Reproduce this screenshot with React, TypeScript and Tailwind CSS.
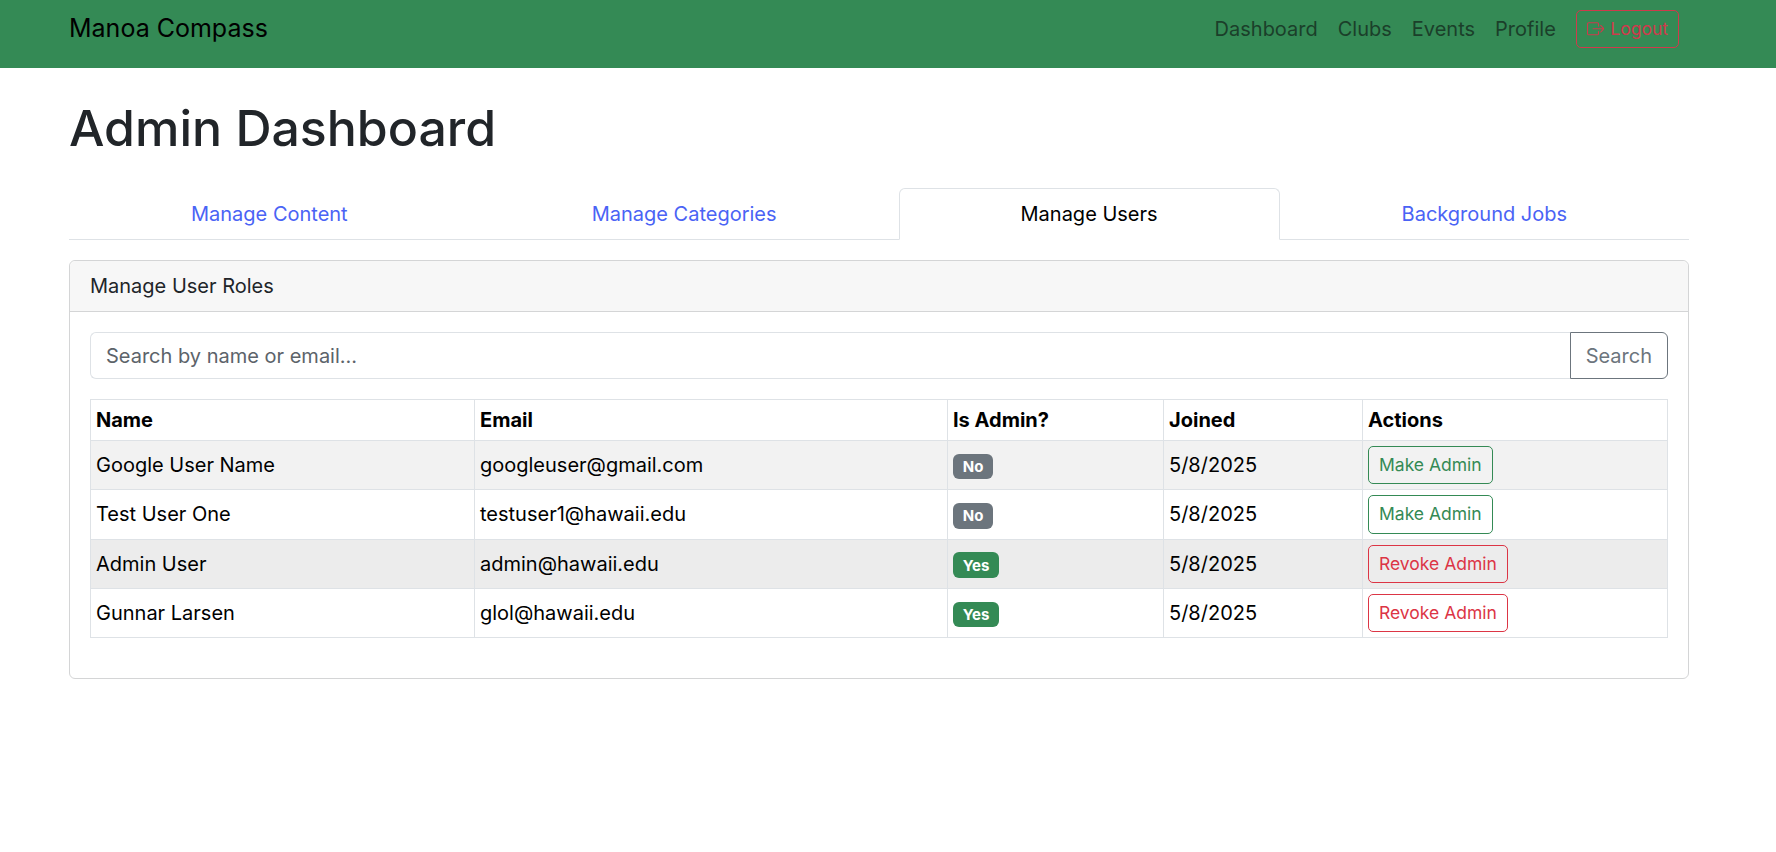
type UserRow = {
  readonly name: string;
  readonly email: string;
  readonly admin: boolean;
  readonly shade: string;
};

const USERS: readonly UserRow[] = [
  { name: "Google User Name", email: "googleuser@gmail.com", admin: false, shade: "bg-[#f2f2f2]" },
  { name: "Test User One", email: "testuser1@hawaii.edu", admin: false, shade: "bg-white" },
  { name: "Admin User", email: "admin@hawaii.edu", admin: true, shade: "bg-[#ececec]" },
  { name: "Gunnar Larsen", email: "glol@hawaii.edu", admin: true, shade: "bg-white" },
];

const NAV_LINKS = ["Dashboard", "Clubs", "Events", "Profile"];

const cellClass = "border border-[#dee2e6] p-[5px] align-middle";

function Navbar() {
  return (
    <nav className="flex h-[68px] items-center justify-between bg-[#348a55] pb-[10px] pl-[69px] pr-[97px]">
      <span className="text-[25px] text-black">Manoa Compass</span>
      <div className="flex items-center gap-[20px] text-[20px] text-[#1b3f2a]">
        {NAV_LINKS.map((link) => (
          <span key={link}>{link}</span>
        ))}
        <button className="flex h-[38px] items-center gap-[6px] rounded-[5px] border border-[#cf3a4c] px-[10px] text-[17.5px] text-[#cf3a4c]">
          <svg width="17.5" height="17.5" viewBox="0 0 16 16" fill="currentColor">
            <path
              fillRule="evenodd"
              d="M10 12.5a.5.5 0 0 1-.5.5h-8a.5.5 0 0 1-.5-.5v-9a.5.5 0 0 1 .5-.5h8a.5.5 0 0 1 .5.5v2a.5.5 0 0 0 1 0v-2A1.5 1.5 0 0 0 9.5 2h-8A1.5 1.5 0 0 0 0 3.5v9A1.5 1.5 0 0 0 1.5 14h8a1.5 1.5 0 0 0 1.5-1.5v-2a.5.5 0 0 0-1 0z"
            />
            <path
              fillRule="evenodd"
              d="M15.854 8.354a.5.5 0 0 0 0-.708l-3-3a.5.5 0 0 0-.708.708L14.293 7.5H5.5a.5.5 0 0 0 0 1h8.793l-2.147 2.146a.5.5 0 0 0 .708.708z"
            />
          </svg>
          Logout
        </button>
      </div>
    </nav>
  );
}

function Tabs() {
  return (
    <div className="flex border-b border-[#dee2e6] text-center text-[20px] leading-[30px]">
      <a className="-mb-px flex-auto border border-transparent px-[20px] py-[10px] text-[#4a63f5]">Manage Content</a>
      <a className="-mb-px flex-auto border border-transparent px-[20px] py-[10px] text-[#4a63f5]">Manage Categories</a>
      <a className="-mb-px flex-auto rounded-t-[6px] border border-[#dee2e6] border-b-white bg-white px-[20px] py-[10px] text-black">
        Manage Users
      </a>
      <a className="-mb-px flex-auto border border-transparent px-[20px] py-[10px] text-[#4a63f5]">Background Jobs</a>
    </div>
  );
}

function Badge({ admin }: { readonly admin: boolean }) {
  return (
    <span
      className={`inline-block rounded-[6px] px-[9.75px] py-[5.25px] text-[15px] leading-none font-bold text-white ${admin ? "bg-[#348a55]" : "bg-[#6c757d]"}`}
    >
      {admin ? "Yes" : "No"}
    </span>
  );
}

function RoleButton({ admin }: { readonly admin: boolean }) {
  const tone = admin ? "border-[#dc3545] text-[#dc3545]" : "border-[#348a55] text-[#348a55]";
  return (
    <button className={`rounded-[5px] border px-[10px] py-[5px] text-[17.5px] leading-[1.5] ${tone}`}>
      {admin ? "Revoke Admin" : "Make Admin"}
    </button>
  );
}

function UsersTable() {
  return (
    <table className="w-full table-fixed border-collapse text-[20px] leading-[30px] text-black">
      <colgroup>
        <col className="w-[384px]" />
        <col className="w-[473px]" />
        <col className="w-[216px]" />
        <col className="w-[199px]" />
        <col />
      </colgroup>
      <thead>
        <tr className="text-left">
          <th className={cellClass}>Name</th>
          <th className={cellClass}>Email</th>
          <th className={cellClass}>Is Admin?</th>
          <th className={cellClass}>Joined</th>
          <th className={cellClass}>Actions</th>
        </tr>
      </thead>
      <tbody>
        {USERS.map((user) => (
          <tr key={user.email} className={user.shade}>
            <td className={cellClass}>{user.name}</td>
            <td className={cellClass}>{user.email}</td>
            <td className={cellClass}>
              <Badge admin={user.admin} />
            </td>
            <td className={cellClass}>5/8/2025</td>
            <td className={cellClass}>
              <RoleButton admin={user.admin} />
            </td>
          </tr>
        ))}
      </tbody>
    </table>
  );
}

export default function App() {
  return (
    <div className="min-h-[852px] bg-white font-['Inter',sans-serif] text-[#212529]">
      <Navbar />
      <main className="mx-[69px] w-[1620px]">
        <h1 className="pt-[30px] pb-[30px] text-[50px] leading-[60px] font-medium">Admin Dashboard</h1>
        <Tabs />
        <section className="mt-[20px] rounded-[6px] border border-[#d4d5d6]">
          <div className="rounded-t-[6px] border-b border-[#d4d5d6] bg-[#f7f7f7] px-[20px] py-[10px] text-[20px] leading-[30px]">
            Manage User Roles
          </div>
          <div className="p-[20px]">
            <div className="mb-[20px] flex text-[20px] leading-[30px]">
              <div className="flex-1 rounded-l-[6px] border border-r-0 border-[#dee2e6] px-[15px] py-[7.5px] text-[#5c636a]">
                Search by name or email...
              </div>
              <button className="rounded-r-[6px] border border-[#6c757d] px-[15px] py-[7.5px] text-[#6c757d]">
                Search
              </button>
            </div>
            <UsersTable />
            <div className="h-[20px]" />
          </div>
        </section>
      </main>
    </div>
  );
}
